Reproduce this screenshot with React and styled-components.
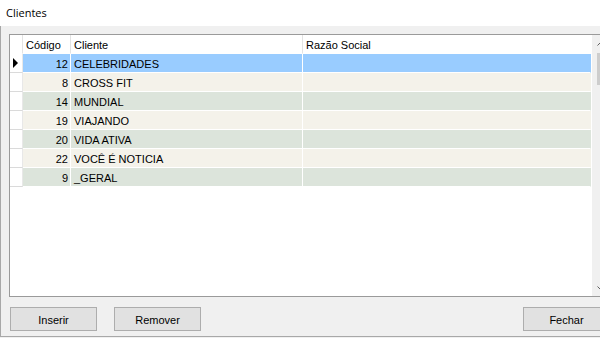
import React from 'react'
import styled, { createGlobalStyle } from 'styled-components'

const GlobalStyle = createGlobalStyle`
  html, body {
    margin: 0;
    padding: 0;
    overflow: hidden;
    background: #f0f0f0;
  }
  body {
    font-family: "Liberation Sans", Arial, sans-serif;
    font-size: 11px;
    color: #000;
  }
`

const rows = [
  { codigo: 12, cliente: 'CELEBRIDADES', razao: '' },
  { codigo: 8, cliente: 'CROSS FIT', razao: '' },
  { codigo: 14, cliente: 'MUNDIAL', razao: '' },
  { codigo: 19, cliente: 'VIAJANDO', razao: '' },
  { codigo: 20, cliente: 'VIDA ATIVA', razao: '' },
  { codigo: 22, cliente: 'VOCÊ É NOTICIA', razao: '' },
  { codigo: 9, cliente: '_GERAL', razao: '' }
]

const COLS = '13px 48px 232px 1fr'

const Window = styled.div`
  width: 620px;
  height: 338px;
  display: flex;
  flex-direction: column;
`

const TitleBar = styled.div`
  height: 26px;
  flex: none;
  background: #fff;
  display: flex;
  align-items: center;
  padding-left: 6px;
  padding-bottom: 1px;
  box-sizing: border-box;
  font-family: "Open Sans", "Noto Sans", sans-serif;
  font-size: 11px;
  color: #000;
`

const Body = styled.div`
  height: 311px;
  flex: none;
  box-sizing: border-box;
  border-left: 1px solid #a8a8a8;
  border-bottom: 1px solid #a8a8a8;
  background: #f0f0f0;
  display: flex;
  flex-direction: column;
  padding: 8px 10px 0 8px;
`

const GridFrame = styled.div`
  height: 263px;
  box-sizing: border-box;
  border: 1px solid #9a9a9a;
  background: #fff;
  display: flex;
`

const Table = styled.div`
  flex: 1;
  display: flex;
  flex-direction: column;
`

const Row = styled.div`
  display: grid;
  grid-template-columns: ${COLS};
  height: 19px;
`

const HeadCell = styled.div`
  box-sizing: border-box;
  border-right: 1px solid ${p => (p.$last ? 'transparent' : '#e3e3e3')};
  border-bottom: 1px solid #fff;
  padding: 1px 0 0 3px;
  display: flex;
  align-items: center;
  white-space: nowrap;
`

const Indicator = styled.div`
  box-sizing: border-box;
  background: #fff;
  border-right: 1px solid #e8e8e8;
  border-bottom: 1px solid #dadada;
  display: flex;
  align-items: center;
  justify-content: center;
`

const Cell = styled.div`
  box-sizing: border-box;
  border-right: 1px solid ${p => (p.$last ? 'transparent' : '#fff')};
  border-bottom: 1px solid #fff;
  display: flex;
  align-items: center;
  justify-content: ${p => (p.$right ? 'flex-end' : 'flex-start')};
  padding: ${p => (p.$right ? '1px 2px 0 0' : '1px 0 0 3px')};
  white-space: nowrap;
`

const Arrow = styled.div`
  width: 0;
  height: 0;
  border-top: 5px solid transparent;
  border-bottom: 5px solid transparent;
  border-left: 5px solid #000;
  margin-right: 1px;
`

const ScrollBar = styled.div`
  width: 17px;
  flex: none;
  margin-left: 1px;
  background: #f0f0f0;
  display: flex;
  flex-direction: column;
  align-items: center;
`

const ScrollButton = styled.div`
  width: 17px;
  height: 17px;
  flex: none;
  display: flex;
  align-items: center;
  justify-content: center;
`

const Thumb = styled.div`
  width: 8px;
  height: 32px;
  margin-top: 1px;
  background: #cdcdcd;
`

const Spacer = styled.div`
  flex: 1;
`

const ButtonBar = styled.div`
  display: flex;
  gap: 17px;
  margin-top: 10px;
  padding-left: 1px;
`

const Button = styled.button`
  width: 87px;
  height: 24px;
  box-sizing: border-box;
  border: 1px solid #adadad;
  background: #e1e1e1;
  font-family: "Liberation Sans", Arial, sans-serif;
  font-size: 11px;
  color: #000;
  padding: 1px 0 0;
  margin-left: ${p => (p.$push ? 'auto' : '0')};
`

const Chevron = ({ up }) => (
  <svg width='7' height='4' viewBox='0 0 7 4'>
    <path
      d={up ? 'M0.5 3.5 L3.5 0.5 L6.5 3.5' : 'M0.5 0.5 L3.5 3.5 L6.5 0.5'}
      fill='none'
      stroke='#606060'
      strokeWidth='1'
    />
  </svg>
)

const rowColor = (i) => {
  if (i === 0) return '#99ccff'
  return i % 2 === 0 ? '#dce4db' : '#f4f2ea'
}

export default function App () {
  return (
    <Window>
      <GlobalStyle />
      <TitleBar>Clientes</TitleBar>
      <Body>
        <GridFrame>
          <Table>
            <Row>
              <HeadCell />
              <HeadCell>Código</HeadCell>
              <HeadCell>Cliente</HeadCell>
              <HeadCell $last>Razão Social</HeadCell>
            </Row>
            {rows.map((r, i) => (
              <Row key={r.codigo}>
                <Indicator>{i === 0 && <Arrow />}</Indicator>
                <Cell $right style={{ background: rowColor(i) }}>{r.codigo}</Cell>
                <Cell style={{ background: rowColor(i) }}>{r.cliente}</Cell>
                <Cell $last style={{ background: rowColor(i) }}>{r.razao}</Cell>
              </Row>
            ))}
          </Table>
          <ScrollBar>
            <ScrollButton><Chevron up /></ScrollButton>
            <Thumb />
            <Spacer />
            <ScrollButton><Chevron /></ScrollButton>
          </ScrollBar>
        </GridFrame>
        <ButtonBar>
          <Button>Inserir</Button>
          <Button>Remover</Button>
          <Button $push>Fechar</Button>
        </ButtonBar>
      </Body>
    </Window>
  )
}
